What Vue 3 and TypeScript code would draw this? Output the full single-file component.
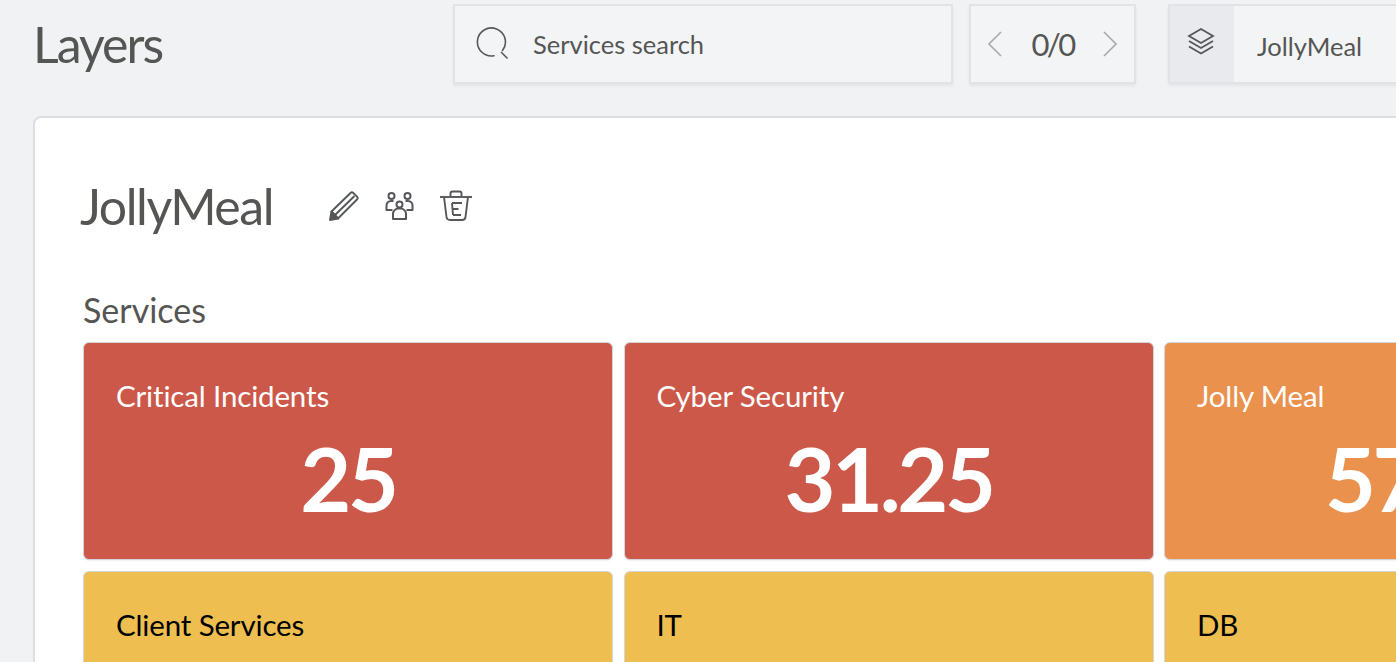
<script setup lang="ts">
interface Tile { name: string; value?: string; tone: string }
const tiles: Tile[] = [
  { name: 'Critical Incidents', value: '25', tone: 'red' },
  { name: 'Cyber Security', value: '31.25', tone: 'red' },
  { name: 'Jolly Meal', value: '57.14', tone: 'orange' },
  { name: 'Client Services', tone: 'yellow' },
  { name: 'IT', tone: 'yellow' },
  { name: 'DB', tone: 'yellow' },
]
</script>

<template>
  <div class="page">
    <header class="top">
      <h1 class="title">Layers</h1>
      <div class="box search">
        <svg class="search-icon" width="36" height="36" viewBox="0 0 36 36" fill="none" stroke="#55575a" stroke-width="1.6">
          <path d="M20 29.7A14 14 0 1 1 28.500 24.500" stroke-linecap="round" />
          <path d="M27 26l6.500 6.500" />
        </svg>
        <span class="search-text">Services search</span>
      </div>
      <div class="box pager">
        <svg width="16" height="26" viewBox="0 0 16 26" fill="none" stroke="#a9abad" stroke-width="1.7"><path d="M14 1L2 13l12 12" /></svg>
        <span class="count">0/0</span>
        <svg width="16" height="26" viewBox="0 0 16 26" fill="none" stroke="#a9abad" stroke-width="1.7"><path d="M2 1l12 12L2 25" /></svg>
      </div>
      <div class="box layer">
        <div class="layer-icon">
          <svg width="28" height="28" viewBox="0 0 28 28" fill="none" stroke="#55575a" stroke-width="1.8">
            <path d="M14 2L26 9l-12 7L2 9z" />
            <path d="M2 14l12 7 12-7" />
            <path d="M2 19.500l12 7 12-7" />
          </svg>
        </div>
        <span class="layer-name">JollyMeal</span>
      </div>
    </header>

    <main class="card">
      <div class="heading">
        <h2 class="name">JollyMeal</h2>
        <div class="actions">
          <svg class="ic-pencil" width="30" height="30" viewBox="0 0 30 30" fill="none" stroke="#55575a" stroke-width="1.9" stroke-linejoin="round">
            <path d="M2.500 20.500L21.500 2a2 2 0 0 1 2.800 0l3.700 3.700a2 2 0 0 1 0 2.800L9 27.500z" />
            <path d="M6 24L25.500 5" />
            <path d="M2.500 20.500L9 27.500 1 29z" fill="#55575a" />
          </svg>
          <svg class="ic-people" width="30" height="30" viewBox="0 0 30 30" fill="none" stroke="#55575a" stroke-width="2" stroke-linejoin="round">
            <circle cx="6.500" cy="5" r="3" />
            <circle cx="22.500" cy="5" r="3" />
            <circle cx="14.500" cy="13.500" r="3" />
            <path d="M7.500 19H1.500v-4.500a4.500 4.500 0 0 1 4.500-4.500h2.500" />
            <path d="M21.500 19h6v-4.500a4.500 4.500 0 0 0-4.500-4.500h-2.500" />
            <path d="M8 28v-5a5.500 5.500 0 0 1 5.500-5.500h2a5.500 5.500 0 0 1 5.500 5.500v5z" />
          </svg>
          <svg class="ic-trash" width="34" height="34" viewBox="0 0 34 34" fill="none" stroke="#55575a" stroke-width="1.9">
            <path d="M1 8h32" />
            <path d="M11.500 7.500V4.500a2 2 0 0 1 2-2h7a2 2 0 0 1 2 2v3" />
            <path d="M5 8l2.500 20a3.500 3.500 0 0 0 3.500 3h12a3.500 3.500 0 0 0 3.500-3L29 8" />
            <path d="M13 14h10M13.500 20h6M14 26h8M13 14l1 12" />
          </svg>
        </div>
      </div>
      <h3 class="section">Services</h3>
      <div class="grid">
        <article v-for="t in tiles" :key="t.name" class="tile" :class="t.tone">
          <div class="tile-name">{{ t.name }}</div>
          <div v-if="t.value" class="tile-value">{{ t.value }}</div>
        </article>
      </div>
    </main>
  </div>
</template>

<style scoped>
.page {
  width: 1396px;
  height: 662px;
  overflow: hidden;
  background: #f1f2f4;
  font-family: "Lato", "Open Sans", sans-serif;
  color: #555654;
  box-sizing: border-box;
  padding: 4px 0 0 33px;
}
.top {
  display: flex;
  align-items: flex-start;
  height: 80px;
}
.title {
  margin: 0;
  width: 420px;
  flex: none;
  font-size: 50px;
  font-weight: 400;
  line-height: 80px;
  letter-spacing: -2px;
}
.box {
  box-sizing: border-box;
  height: 80px;
  display: flex;
  align-items: center;
  background: #f3f4f6;
  border: 2px solid #e1e3e6;
  box-shadow: 0 2px 3px rgba(0, 0, 0, 0.06);
  flex: none;
}
.search {
  width: 500px;
  padding-left: 19px;
  font-size: 25.5px;
  gap: 23px;
}
.search-icon { flex: none; }
.pager {
  width: 167px;
  margin-left: 16px;
  padding: 0 16px;
  justify-content: space-between;
  font-size: 31px;
}
.count { letter-spacing: -2.6px; }
.layer {
  width: 300px;
  margin-left: 32px;
}
.layer-icon {
  width: 64px;
  height: 100%;
  background: #e9eaee;
  display: flex;
  align-items: center;
  justify-content: center;
  padding: 0 2px 6px 0;
  box-sizing: border-box;
}
.layer-name {
  margin-left: 23px;
  padding-top: 4px;
  font-size: 25.5px;
}
.card {
  margin-top: 32px;
  width: 1500px;
  height: 700px;
  box-sizing: border-box;
  background: #fff;
  border: 2px solid #dcdee2;
  border-radius: 8px;
  padding: 0 0 0 45px;
}
.heading {
  display: flex;
  align-items: center;
  height: 176px;
}
.name {
  margin: 0;
  font-size: 50px;
  font-weight: 400;
  line-height: 176px;
  letter-spacing: -1.45px;
}
.actions {
  display: flex;
  align-items: center;
  gap: 24px;
  margin-left: 56px;
}
.ic-pencil { margin-right: 2px; }
.section {
  margin: 0 0 0 3px;
  font-size: 34px;
  font-weight: 400;
  line-height: 32px;
  height: 48px;
}
.grid {
  margin-left: 3px;
  display: grid;
  grid-template-columns: repeat(3, 530px);
  grid-auto-rows: 218px;
  column-gap: 10.5px;
  row-gap: 11px;
}
.tile {
  box-sizing: border-box;
  border: 1px solid #d3d5da;
  box-shadow: 0 1px 2px rgba(0, 0, 0, 0.06);
  border-radius: 6px;
  padding: 33px 32px 0;
}
.red { background: #cc5849; color: #fff; }
.orange { background: #ea914e; color: #fff; }
.yellow { background: #eebe50; color: #000; }
.tile-name {
  font-size: 29.5px;
  line-height: 40px;
  letter-spacing: -0.15px;
}
.tile-value {
  text-align: center;
  font-size: 88px;
  font-weight: 700;
  line-height: 100px;
  margin-top: 12px;
  letter-spacing: -3.4px;
}
</style>

<style>
html, body { margin: 0; overflow: hidden; }
</style>
